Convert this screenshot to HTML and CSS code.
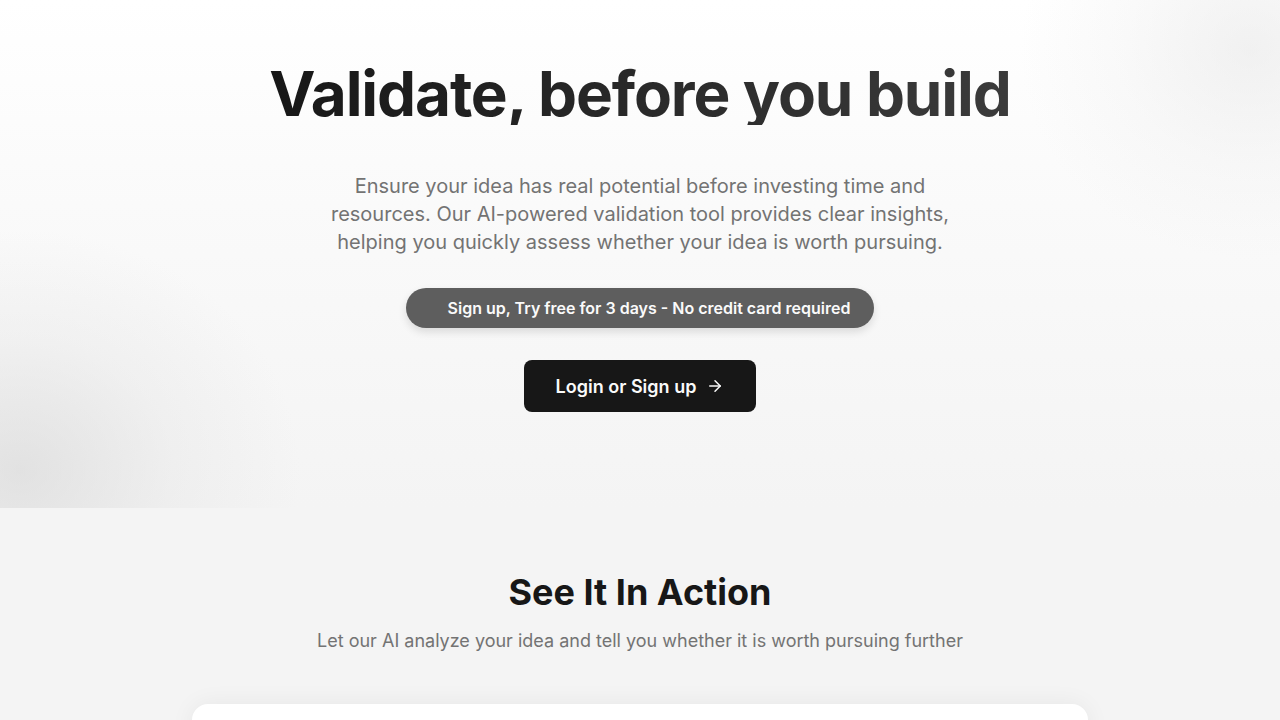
FILE: index.html
```html
<!DOCTYPE html>
<html lang="en">
<head>
<meta charset="utf-8">
<title>Validate, before you build</title>
<link rel="stylesheet" href="styles.css">
</head>
<body>
<section class="hero">
  <div class="blob blob-left"></div>
  <div class="blob blob-right"></div>
  <div class="hero-inner">
    <h1 class="hero-title">Validate, before you build</h1>
    <p class="hero-text">Ensure your idea has real potential before investing time and resources. Our AI-powered validation tool provides clear insights, helping you quickly assess whether your idea is worth pursuing.</p>
    <div class="pill"><span class="pill-icon"></span><span>Sign up, Try free for 3 days - No credit card required</span></div>
    <a class="cta" href="#">Login or Sign up
      <svg class="cta-arrow" viewBox="0 0 24 24" width="18" height="18" fill="none" stroke="currentColor" stroke-width="2" stroke-linecap="round" stroke-linejoin="round"><path d="M5 12h14"/><path d="M12 5l7 7-7 7"/></svg>
    </a>
  </div>
</section>
<section class="demo">
  <h2 class="demo-title">See It In Action</h2>
  <p class="demo-text">Let our AI analyze your idea and tell you whether it is worth pursuing further</p>
  <div class="demo-card"></div>
</section>
</body>
</html>
```
FILE: styles.css
```css
* { box-sizing: border-box; }
html, body { margin: 0; padding: 0; }
body {
  font-family: Inter, "Noto Sans", sans-serif;
  background: #f4f4f4;
  color: #171717;
  overflow: hidden;
}
.hero {
  position: relative;
  height: 508px;
  overflow: hidden;
  background: linear-gradient(180deg, #ffffff 0%, #fafafa 40%, #f4f4f4 100%);
}
.blob {
  position: absolute;
  border-radius: 50%;
  pointer-events: none;
}
.blob-left {
  left: -260px;
  top: 230px;
  width: 560px;
  height: 480px;
  background: radial-gradient(closest-side, rgba(210,210,210,0.55), rgba(225,225,225,0.3) 55%, rgba(240,240,240,0) 100%);
}
.blob-right {
  right: -200px;
  top: -160px;
  width: 460px;
  height: 420px;
  background: radial-gradient(closest-side, rgba(225,225,225,0.45), rgba(235,235,235,0.25) 55%, rgba(245,245,245,0) 100%);
}
.hero-inner {
  position: relative;
  display: flex;
  flex-direction: column;
  align-items: center;
  padding-top: 63px;
}
.hero-title {
  margin: 0;
  font-size: 62px;
  line-height: 62px;
  font-weight: 700;
  letter-spacing: -0.018em;
  background: linear-gradient(90deg, #171717 0%, #3b3b3b 100%);
  -webkit-background-clip: text;
  background-clip: text;
  color: transparent;
}
.hero-text {
  margin: 47px 0 0;
  max-width: 640px;
  text-align: center;
  font-size: 20px;
  line-height: 28px;
  color: #737373;
}
.pill {
  margin-top: 32px;
  height: 40px;
  padding: 0 24px 0 20px;
  display: flex;
  align-items: center;
  gap: 6px;
  border-radius: 20px;
  background: #5e5e5e;
  color: #fafafa;
  font-size: 16px;
  font-weight: 600;
  box-shadow: 0 4px 8px rgba(0,0,0,0.12);
}
.pill-icon {
  width: 16px;
  height: 16px;
}
.cta {
  margin-top: 32px;
  height: 52px;
  width: 232px;
  display: flex;
  align-items: center;
  justify-content: center;
  gap: 10px;
  border-radius: 8px;
  background: #171717;
  color: #fafafa;
  font-size: 18px;
  font-weight: 600;
  text-decoration: none;
}
.cta-arrow { display: block; }
.demo {
  display: flex;
  flex-direction: column;
  align-items: center;
  padding-top: 64px;
}
.demo-title {
  margin: 0;
  font-size: 36px;
  line-height: 40px;
  font-weight: 700;
  color: #171717;
}
.demo-text {
  margin: 15px 0 0;
  font-size: 18px;
  line-height: 28px;
  color: #737373;
}
.demo-card {
  margin-top: 49px;
  width: 896px;
  height: 200px;
  background: #ffffff;
  border-radius: 16px;
  box-shadow: 0 0 24px rgba(0,0,0,0.06);
}
```
